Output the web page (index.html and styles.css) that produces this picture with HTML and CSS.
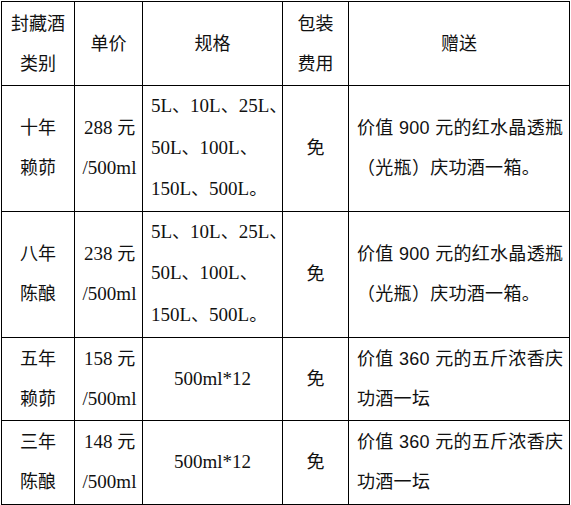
FILE: index.html
```html
<!DOCTYPE html>
<html lang="zh">
<head>
<meta charset="utf-8">
<link rel="stylesheet" href="styles.css">
</head>
<body>
<table class="wine">
  <colgroup>
    <col class="c1"><col class="c2"><col class="c3"><col class="c4"><col class="c5">
  </colgroup>
  <tr class="head">
    <td class="center">封藏酒<br>类别</td>
    <td class="center">单价</td>
    <td class="center">规格</td>
    <td class="center">包装<br>费用</td>
    <td class="center">赠送</td>
  </tr>
  <tr class="tall">
    <td class="center">十年<br>赖茆</td>
    <td class="price"><span class="lat">288 </span>元<br><span class="lat">/500ml</span></td>
    <td class="spec"><span class="lat">5L</span>、<span class="lat">10L</span>、<span class="lat">25L</span>、<br><span class="lat">50L</span>、<span class="lat">100L</span>、<br><span class="lat">150L</span>、<span class="lat">500L</span>。</td>
    <td class="center">免</td>
    <td class="gift">价值 900 元的红水晶透瓶<br>（光瓶）庆功酒一箱。</td>
  </tr>
  <tr class="tall2">
    <td class="center">八年<br>陈酿</td>
    <td class="price"><span class="lat">238 </span>元<br><span class="lat">/500ml</span></td>
    <td class="spec"><span class="lat">5L</span>、<span class="lat">10L</span>、<span class="lat">25L</span>、<br><span class="lat">50L</span>、<span class="lat">100L</span>、<br><span class="lat">150L</span>、<span class="lat">500L</span>。</td>
    <td class="center">免</td>
    <td class="gift">价值 900 元的红水晶透瓶<br>（光瓶）庆功酒一箱。</td>
  </tr>
  <tr class="short">
    <td class="center">五年<br>赖茆</td>
    <td class="price"><span class="lat">158 </span>元<br><span class="lat">/500ml</span></td>
    <td class="center"><span class="lat">500ml*12</span></td>
    <td class="center">免</td>
    <td class="gift">价值 360 元的五斤浓香庆<br>功酒一坛</td>
  </tr>
  <tr class="short2">
    <td class="center">三年<br>陈酿</td>
    <td class="price"><span class="lat">148 </span>元<br><span class="lat">/500ml</span></td>
    <td class="center"><span class="lat">500ml*12</span></td>
    <td class="center">免</td>
    <td class="gift">价值 360 元的五斤浓香庆<br>功酒一坛</td>
  </tr>
</table>
</body>
</html>
```

FILE: styles.css
```css
html, body {
  margin: 0;
  padding: 0;
  background: #ffffff;
}

body {
  padding: 1px 0 0 1px;
}

.wine {
  border-collapse: collapse;
  table-layout: fixed;
  width: 568px;
  color: #111111;
  font-family: "Liberation Serif", "Noto Sans CJK SC", serif;
  font-size: 18px;
  line-height: 40px;
}

.c1 { width: 73px; }
.c2 { width: 68px; }
.c3 { width: 140px; }
.c4 { width: 66px; }
.c5 { width: 221px; }

.wine td {
  border: 1px solid #000000;
  padding: 0;
  vertical-align: middle;
  white-space: nowrap;
}

.head { height: 84px; }
.tall { height: 125px; }
.tall2 { height: 126px; }
.short { height: 83px; }
.short2 { height: 84px; }

.lat {
  font-size: 19px;
  line-height: 0;
}

.center {
  text-align: center;
}

.price {
  text-align: center;
  padding-left: 2px !important;
}

.spec {
  text-align: left;
  padding-left: 8px !important;
  line-height: 41.5px;
}

.gift {
  text-align: left;
  padding-left: 8px !important;
  font-family: "Liberation Sans", "Noto Sans CJK SC", sans-serif;
  letter-spacing: 0.3px;
}
```
